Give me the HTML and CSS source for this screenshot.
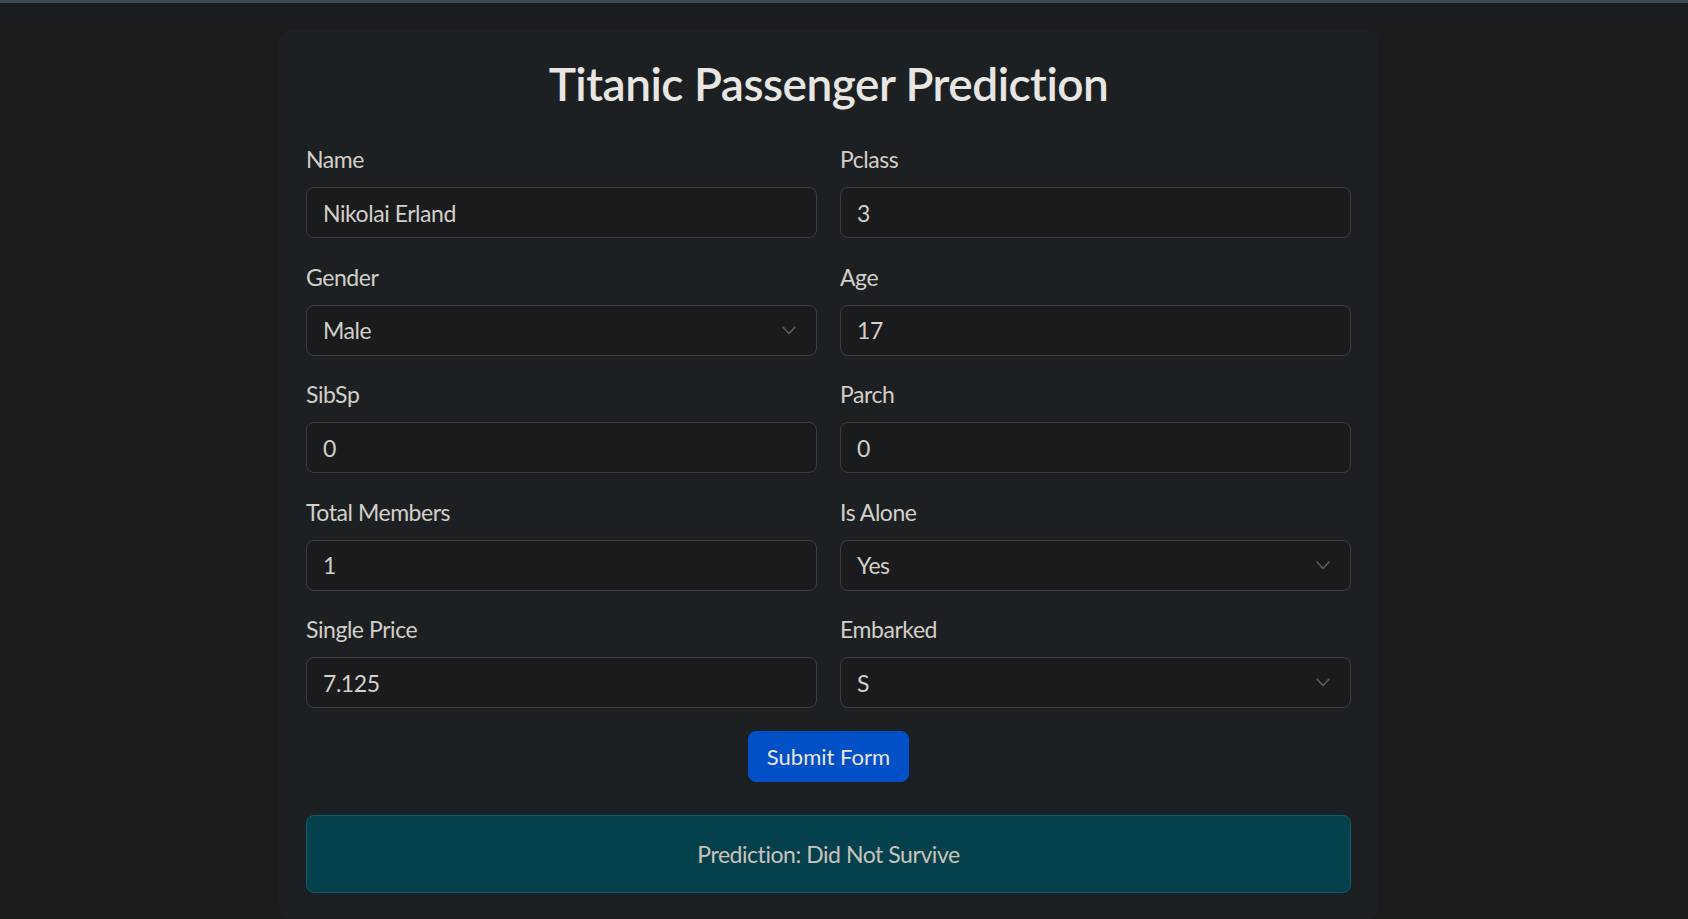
FILE: index.html
```html
<!DOCTYPE html>
<html lang="en">
<head>
<meta charset="utf-8">
<title>Titanic Passenger Prediction</title>
<link rel="stylesheet" href="styles.css">
</head>
<body>
<div class="topbar"></div>
<main class="page">
  <section class="card">
    <h1 class="title">Titanic Passenger Prediction</h1>
    <form class="form-grid">
      <div class="field">
        <label class="label" for="name">Name</label>
        <input class="control" id="name" type="text" value="Nikolai Erland">
      </div>
      <div class="field">
        <label class="label" for="pclass">Pclass</label>
        <input class="control" id="pclass" type="text" value="3">
      </div>
      <div class="field">
        <label class="label" for="gender">Gender</label>
        <div class="select-wrap">
          <select class="control select" id="gender"><option>Male</option><option>Female</option></select>
          <svg class="chevron" width="14" height="9" viewBox="0 0 14 9"><polyline points="1,1 7,7.5 13,1" fill="none" stroke="#5a5f63" stroke-width="1.5" stroke-linecap="round" stroke-linejoin="round"/></svg>
        </div>
      </div>
      <div class="field">
        <label class="label" for="age">Age</label>
        <input class="control" id="age" type="text" value="17">
      </div>
      <div class="field">
        <label class="label" for="sibsp">SibSp</label>
        <input class="control" id="sibsp" type="text" value="0">
      </div>
      <div class="field">
        <label class="label" for="parch">Parch</label>
        <input class="control" id="parch" type="text" value="0">
      </div>
      <div class="field">
        <label class="label" for="total">Total Members</label>
        <input class="control" id="total" type="text" value="1">
      </div>
      <div class="field">
        <label class="label" for="alone">Is Alone</label>
        <div class="select-wrap">
          <select class="control select" id="alone"><option>Yes</option><option>No</option></select>
          <svg class="chevron" width="14" height="9" viewBox="0 0 14 9"><polyline points="1,1 7,7.5 13,1" fill="none" stroke="#5a5f63" stroke-width="1.5" stroke-linecap="round" stroke-linejoin="round"/></svg>
        </div>
      </div>
      <div class="field">
        <label class="label" for="price">Single Price</label>
        <input class="control" id="price" type="text" value="7.125">
      </div>
      <div class="field">
        <label class="label" for="embarked">Embarked</label>
        <div class="select-wrap">
          <select class="control select" id="embarked"><option>S</option><option>C</option><option>Q</option></select>
          <svg class="chevron" width="14" height="9" viewBox="0 0 14 9"><polyline points="1,1 7,7.5 13,1" fill="none" stroke="#5a5f63" stroke-width="1.5" stroke-linecap="round" stroke-linejoin="round"/></svg>
        </div>
      </div>
    </form>
    <div class="actions">
      <button class="btn" type="button">Submit Form</button>
    </div>
    <div class="alert">Prediction: Did Not Survive</div>
  </section>
</main>
</body>
</html>
```
FILE: styles.css
```css
* { box-sizing: border-box; }

html, body {
  margin: 0;
  padding: 0;
  background: #1b1c1e;
  font-family: "Segoe UI", Lato, "Noto Sans", sans-serif;
  color: #d3cfc9;
  overflow: hidden;
}

.topbar {
  height: 3px;
  background: #3b4a53;
}

.page {
  padding: 27px 30px 0 0;
}

.card {
  width: 1100px;
  margin: 0 auto;
  background: #1d2022;
  border-radius: 13px;
  padding: 26px 28px 27px 27px;
}

.title {
  margin: 0;
  text-align: center;
  font-size: 46px;
  line-height: 56px;
  font-weight: 600;
  letter-spacing: -0.5px;
  color: #e8e6e3;
}

.form-grid {
  margin-top: 30px;
  display: grid;
  grid-template-columns: 1fr 1fr;
  column-gap: 23px;
  row-gap: 21.6px;
}

.field {
  display: flex;
  flex-direction: column;
}

.label {
  font-size: 23px;
  line-height: 34px;
  letter-spacing: -0.45px;
  margin-bottom: 11px;
  color: #d3cfc9;
}

.control {
  display: block;
  width: 100%;
  height: 51px;
  padding: 0 16px;
  font-family: inherit;
  font-size: 23px;
  letter-spacing: -0.45px;
  color: #d3cfc9;
  background: #1a1b1d;
  border: 1px solid #3a3e41;
  border-radius: 8px;
  outline: none;
}

.select-wrap {
  position: relative;
}

.select {
  appearance: none;
  -webkit-appearance: none;
}

.chevron {
  position: absolute;
  right: 21px;
  top: 21px;
  pointer-events: none;
}

.actions {
  display: flex;
  justify-content: center;
  margin-top: 22.6px;
}

.btn {
  height: 51px;
  padding: 0 18px;
  font-family: inherit;
  font-size: 22px;
  color: #e8e6e3;
  background: #0250c7;
  border: 1px solid #0250c7;
  border-radius: 8px;
}

.alert {
  margin-top: 33px;
  height: 78px;
  display: flex;
  align-items: center;
  justify-content: center;
  font-size: 23px;
  letter-spacing: -0.45px;
  color: #c8c3bc;
  background: #04414d;
  border: 1px solid #0b5e6e;
  border-radius: 8px;
}
```
